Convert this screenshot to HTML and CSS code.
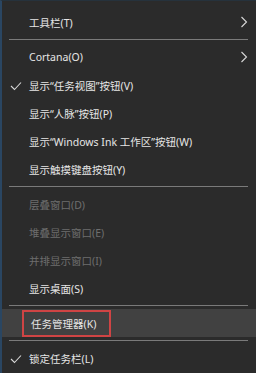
FILE: index.html
```html
<!DOCTYPE html>
<html lang="zh-CN">
<head>
    <meta charset="UTF-8">
    <title>任务栏菜单</title>
    <link rel="stylesheet" href="styles.css">
</head>
<body>
    <div class="menu">
        <div class="item">
            <span class="label">工具栏(T)</span>
            <svg class="arrow" width="8" height="12" viewBox="0 0 8 12"><path d="M1.5 1 L6.5 6 L1.5 11" fill="none" stroke="#d8d8d8" stroke-width="1.1"/></svg>
        </div>
        <div class="sep"></div>
        <div class="item">
            <span class="label">Cortana(O)</span>
            <svg class="arrow" width="8" height="12" viewBox="0 0 8 12"><path d="M1.5 1 L6.5 6 L1.5 11" fill="none" stroke="#d8d8d8" stroke-width="1.1"/></svg>
        </div>
        <div class="item">
            <svg class="check" width="12" height="10" viewBox="0 0 12 10"><path d="M1 5 L4.5 8.5 L11 1.5" fill="none" stroke="#d8d8d8" stroke-width="1.1"/></svg>
            <span class="label">显示“任务视图”按钮(V)</span>
        </div>
        <div class="item">
            <span class="label">显示“人脉”按钮(P)</span>
        </div>
        <div class="item">
            <span class="label">显示“Windows Ink 工作区”按钮(W)</span>
        </div>
        <div class="item">
            <span class="label">显示触摸键盘按钮(Y)</span>
        </div>
        <div class="sep"></div>
        <div class="item disabled">
            <span class="label">层叠窗口(D)</span>
        </div>
        <div class="item disabled">
            <span class="label">堆叠显示窗口(E)</span>
        </div>
        <div class="item disabled">
            <span class="label">并排显示窗口(I)</span>
        </div>
        <div class="item">
            <span class="label">显示桌面(S)</span>
        </div>
        <div class="sep"></div>
        <div class="item active">
            <span class="label marked">任务管理器(K)</span>
        </div>
        <div class="sep"></div>
        <div class="item">
            <svg class="check" width="12" height="10" viewBox="0 0 12 10"><path d="M1 5 L4.5 8.5 L11 1.5" fill="none" stroke="#d8d8d8" stroke-width="1.1"/></svg>
            <span class="label">锁定任务栏(L)</span>
        </div>
    </div>
</body>
</html>
```

FILE: styles.css
```css
body {
    margin: 0;
    background-color: #2b2b2b;
    font-family: "Noto Sans", "Noto Sans CJK SC", sans-serif;
}

.menu {
    width: 256px;
    height: 373px;
    box-sizing: border-box;
    padding-top: 7px;
    background-color: #2b2b2b;
    border-left: 2px solid #2a4662;
    border-top: 1px solid #26323c;
    color: #e6e6e6;
    font-size: 10.5px;
}

.item {
    position: relative;
    display: flex;
    align-items: center;
    height: 28px;
    padding-left: 27px;
}

.label {
    white-space: nowrap;
}

.check {
    position: absolute;
    left: 8px;
    top: 10px;
}

.arrow {
    position: absolute;
    right: 8px;
    top: 8px;
}

.disabled {
    color: #6e6e6e;
}

.active {
    background-color: #414141;
}

.marked {
    margin-left: -7px;
    padding: 4px 13px 4px 7px;
    border: 2px solid #cf4444;
}

.sep {
    height: 1px;
    margin: 3px 8px 3px 7px;
    background-color: #7a7a7a;
}
```
